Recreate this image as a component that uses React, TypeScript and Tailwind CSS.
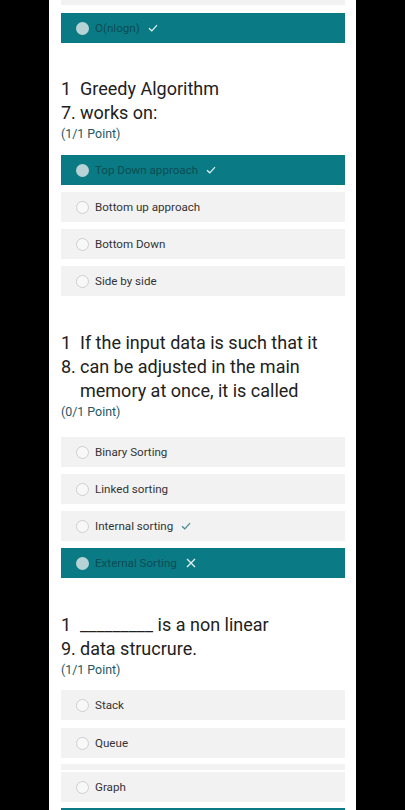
import React from "react";

type Kind = "plain" | "teal";

function Check({ color }: { color: string }) {
  return (
    <svg width="10" height="8" viewBox="0 0 10 8" className="ml-[8px]">
      <path d="M1 4.2 L3.8 6.8 L9 1.2" fill="none" stroke={color} strokeWidth="1.2" />
    </svg>
  );
}

function Cross() {
  return (
    <svg width="10" height="10" viewBox="0 0 10 10" className="ml-[9px]">
      <path d="M1 1 L9 9 M9 1 L1 9" fill="none" stroke="#e6f2f3" strokeWidth="1.3" />
    </svg>
  );
}

function Option({
  label,
  kind = "plain",
  mark,
  className = "",
}: {
  label: string;
  kind?: Kind;
  mark?: "check" | "tealcheck" | "cross";
  className?: string;
}) {
  const teal = kind === "teal";
  return (
    <div
      className={`h-[30px] flex items-center pl-[15px] ${
        teal ? "bg-[#0a7b84]" : "bg-[#f2f2f2]"
      } ${className}`}
    >
      {teal ? (
        <div className="w-[13px] h-[13px] rounded-full bg-[#b7d3d6]" />
      ) : (
        <div className="w-[13px] h-[13px] rounded-full border border-[#cfcfcf] bg-[#f8f8f8]" />
      )}
      <span
        className={`ml-[6px] text-[11.6px] leading-[14px] ${
          teal ? "text-[#0c4c53]" : "text-[#333333]"
        }`}
      >
        {label}
      </span>
      {mark === "check" && <Check color="#e8f3f4" />}
      {mark === "tealcheck" && <Check color="#3e8a90" />}
      {mark === "cross" && <Cross />}
    </div>
  );
}

function Question({
  rows,
  point,
  className = "",
}: {
  rows: [string, React.ReactNode][];
  point: string;
  className?: string;
}) {
  return (
    <div className={className}>
      {rows.map(([n, t], i) => (
        <div key={i} className="flex text-[18px] leading-[24px] text-[#212121]">
          <div className="w-[19px] shrink-0">{n}</div>
          <div className="whitespace-nowrap">{t}</div>
        </div>
      ))}
      <div className="text-[12.4px] leading-[18px] text-[#245866]">{point}</div>
    </div>
  );
}

export default function App() {
  return (
    <div
      className="w-[405px] h-[810px] bg-black flex overflow-hidden"
      style={{ fontFamily: "Roboto, 'Noto Sans', sans-serif" }}
    >
      <div className="ml-[49px] w-[307px] h-[810px] bg-white pl-[12px] pr-[11px] flex flex-col overflow-hidden">
        <div className="h-[5px] bg-[#f2f2f2] shrink-0" />
        <Option label="O(nlogn)" kind="teal" mark="check" className="mt-[8px] shrink-0" />

        <Question
          className="mt-[34px]"
          rows={[
            ["1", "Greedy Algorithm"],
            ["7.", "works on:"],
          ]}
          point="(1/1 Point)"
        />
        <div className="mt-[12px] flex flex-col gap-[7px] shrink-0">
          <Option label="Top Down approach" kind="teal" mark="check" />
          <Option label="Bottom up approach" />
          <Option label="Bottom Down" />
          <Option label="Side by side" />
        </div>

        <Question
          className="mt-[35px]"
          rows={[
            ["1", "If the input data is such that it"],
            ["8.", "can be adjusted in the main"],
            ["", "memory at once, it is called"],
          ]}
          point="(0/1 Point)"
        />
        <div className="mt-[16px] flex flex-col gap-[7px] shrink-0">
          <Option label="Binary Sorting" />
          <Option label="Linked sorting" />
          <Option label="Internal sorting" mark="tealcheck" />
          <Option label="External Sorting" kind="teal" mark="cross" />
        </div>

        <Question
          className="mt-[35px]"
          rows={[
            ["1", "_________ is a non linear"],
            ["9.", "data strucrure."],
          ]}
          point="(1/1 Point)"
        />
        <div className="mt-[11px] flex flex-col shrink-0">
          <Option label="Stack" className="h-[29px]" />
          <Option label="Queue" className="mt-[8px] h-[28px]" />
          <div className="mt-[6px] h-[6px] bg-[#f2f2f2]" />
          <Option label="Graph" className="mt-[2px]" />
          <div className="mt-[6px] h-[3px] bg-[#0a7b84]" />
        </div>
      </div>
    </div>
  );
}
